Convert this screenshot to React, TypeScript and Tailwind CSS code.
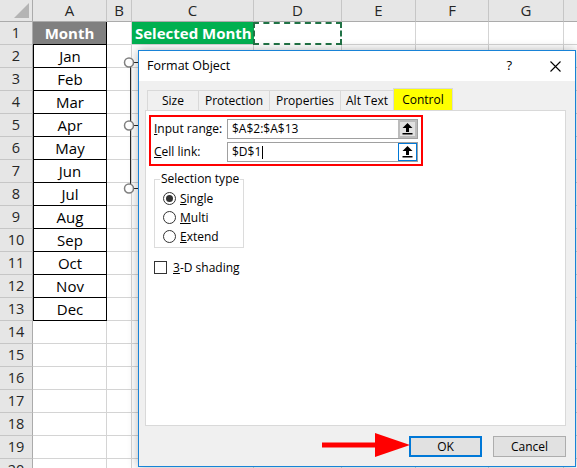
import React from "react";

const months = ["Jan","Feb","Mar","Apr","May","Jun","Jul","Aug","Sep","Oct","Nov","Dec"];
const colLetters = ["A","B","C","D","E","F","G","H"];

function UpArrow() {
  return (
    <svg width="11" height="12" viewBox="0 0 11 12">
      <polygon points="5.5,0 10.5,5 7,5 7,9 4,9 4,5 0.5,5" fill="#000" />
      <rect x="0.5" y="10" width="10" height="1.5" fill="#000" />
    </svg>
  );
}

function Radio({ checked, label, u }: { checked?: boolean; label: string; u: string }) {
  return (
    <div className="flex items-center h-[19px] gap-[4px]">
      <div className="w-[13px] h-[13px] rounded-full border border-[#333] bg-white flex items-center justify-center">
        {checked && <div className="w-[7px] h-[7px] rounded-full bg-[#333]" />}
      </div>
      <span><span className="underline">{u}</span>{label}</span>
    </div>
  );
}

export default function App() {
  const rows = Array.from({ length: 20 }, (_, i) => i + 1);
  return (
    <div className="relative w-[577px] h-[468px] overflow-hidden bg-white" style={{ fontFamily: '"Open Sans", "Liberation Sans", sans-serif' }}>
      <div className="grid w-[639px] grid-cols-[33px_74px_25px_122px_88px_74px_73px_75px_75px] grid-rows-[22px_repeat(20,23px)]">
        {/* header row */}
        <div className="bg-[#e6e6e6] border-r border-b border-[#ababab] relative">
          <svg className="absolute right-[3px] bottom-[3px]" width="15" height="15" viewBox="0 0 15 15">
            <polygon points="15,0 15,15 0,15" fill="#b4b4b4" />
          </svg>
        </div>
        {colLetters.map((c) => (
          <div key={c} className="bg-[#e6e6e6] border-r border-b border-[#c6c6c6] border-b-[#ababab] flex items-center justify-center text-[15px] text-[#262626]">
            {c === "H" ? "" : c}
          </div>
        ))}
        {rows.map((r) => (
          <React.Fragment key={r}>
            <div className="bg-[#e6e6e6] border-r border-r-[#ababab] border-b border-b-[#c6c6c6] flex items-center justify-center text-[14.5px] text-[#262626]">
              {r}
            </div>
            {colLetters.map((c) => {
              if (c === "A" && r === 1)
                return (
                  <div key={c} className="bg-[#808080] border-r border-b border-black flex items-center justify-center text-white font-bold text-[15px]">
                    Month
                  </div>
                );
              if (c === "A" && r <= 13)
                return (
                  <div key={c} className="border-l border-r border-b border-black flex items-center justify-center text-[15px] text-black">
                    {months[r - 2]}
                  </div>
                );
              if (c === "C" && r === 1)
                return (
                  <div key={c} className="bg-[#00b050] border-b border-[#d4d4d4] flex items-center pl-[3px] text-white font-bold text-[15px] whitespace-nowrap">
                    Selected Month
                  </div>
                );
              if (c === "D" && r === 1)
                return (
                  <div key={c} className="border-2 border-dashed border-[#217346] -ml-[1px]" />
                );
              return <div key={c} className="border-r border-b border-[#d4d4d4]" />;
            })}
          </React.Fragment>
        ))}
      </div>

      {/* selection handles of the list box */}
      <svg className="absolute left-[120px] top-[55px]" width="20" height="140" viewBox="0 0 20 140">
        <line x1="10.5" y1="7" x2="10.5" y2="133" stroke="#262626" strokeWidth="1" />
        <line x1="13" y1="7.5" x2="20" y2="7.5" stroke="#262626" strokeWidth="1" />
        <line x1="13" y1="70.5" x2="20" y2="70.5" stroke="#262626" strokeWidth="1" />
        <line x1="13" y1="133.5" x2="20" y2="133.5" stroke="#262626" strokeWidth="1" />
        <circle cx="9" cy="7.5" r="4.5" fill="#fff" stroke="#808080" strokeWidth="1.5" />
        <circle cx="9" cy="70.5" r="4.5" fill="#fff" stroke="#808080" strokeWidth="1.5" />
        <circle cx="9" cy="133.5" r="4.5" fill="#fff" stroke="#808080" strokeWidth="1.5" />
      </svg>

      {/* dialog */}
      <div
        className="absolute left-[138px] top-[50px] w-[438px] h-[417px] border border-[#1883d7] bg-[#f0f0f0] flex flex-col shadow-[0_0_10px_rgba(0,0,0,0.3)] text-[12px] text-black"
        style={{ fontFamily: '"Segoe UI", "Open Sans", "Noto Sans", sans-serif' }}
      >
        <div className="h-[30px] bg-white flex items-center pl-[8px] pr-[14px] text-[12.5px]">
          <span className="flex-1">Format Object</span>
          <span className="mr-[38px] text-[13px]">?</span>
          <svg width="11" height="11" viewBox="0 0 11 11">
            <path d="M0.5 0.5 L10.5 10.5 M10.5 0.5 L0.5 10.5" stroke="#000" strokeWidth="1.1" />
          </svg>
        </div>
        <div className="flex flex-col flex-1 pt-[7px] pl-[6px] pr-[9px] pb-[9px]">
          <div className="flex items-end h-[22px] pl-[2px]">
            {[
              ["Size", "w-[51px]"],
              ["Protection", "w-[71px]"],
              ["Properties", "w-[71px]"],
              ["Alt Text", "w-[53px]"],
            ].map(([t, w]) => (
              <div key={t} className={`${w} h-[20px] border-t border-l border-[#d9d9d9] flex items-center justify-center`}>
                {t}
              </div>
            ))}
            <div className="w-[60px] h-[22px] border-t border-l border-r border-[#d9d9d9] bg-[#ffff00] flex items-center justify-center">
              Control
            </div>
          </div>
          <div className="h-[316px] bg-white border border-[#d9d9d9] pl-[3px] pt-[4px] flex flex-col">
            <div className="w-[274px] border-2 border-[#ff0000] px-[3px] py-[2px] flex flex-col gap-[3px]">
              <div className="flex items-center h-[20px]">
                <span className="w-[73px]"><span className="underline">I</span>nput range:</span>
                <div className="flex-1 h-[20px] border border-[#a0a0a0] flex items-center pl-[4px]">
                  <span className="flex-1">$A$2:$A$13</span>
                  <div className="w-[19px] h-[18px] border-2 border-[#bcbcbc] bg-[#e1e1e1] flex items-center justify-center">
                    <UpArrow />
                  </div>
                </div>
              </div>
              <div className="flex items-center h-[20px]">
                <span className="w-[73px]"><span className="underline">C</span>ell link:</span>
                <div className="flex-1 h-[20px] border border-[#a0a0a0] flex items-center pl-[4px]">
                  <span className="flex-1 flex items-center">$D$1<span className="inline-block w-[1px] h-[13px] bg-black ml-[1px]" /></span>
                  <div className="w-[19px] h-[18px] border border-[#0078d7] bg-white flex items-center justify-center">
                    <UpArrow />
                  </div>
                </div>
              </div>
            </div>
            <fieldset className="ml-[5px] mt-[6px] w-[90px] h-[76px] border border-[#dcdcdc] pl-[8px] pt-[3px]">
              <legend className="ml-[-3px] px-[1px] text-[12px] leading-[14px]">Selection type</legend>
              <Radio checked u="S" label="ingle" />
              <Radio u="M" label="ulti" />
              <Radio u="E" label="xtend" />
            </fieldset>
            <div className="flex items-center gap-[6px] ml-[5px] mt-[12px] h-[15px]">
              <div className="w-[13px] h-[13px] border border-[#333] bg-white" />
              <span><span className="underline">3</span>-D shading</span>
            </div>
          </div>
          <div className="flex justify-end gap-[11px] mt-[10px]">
            <div className="w-[73px] h-[21px] border-2 border-[#0078d7] bg-[#e1e1e1] flex items-center justify-center">OK</div>
            <div className="w-[73px] h-[21px] border border-[#adadad] bg-[#e1e1e1] flex items-center justify-center">Cancel</div>
          </div>
        </div>
      </div>

      {/* red arrow */}
      <svg className="absolute left-[320px] top-[430px]" width="92" height="30" viewBox="0 0 92 30">
        <rect x="2" y="12.5" width="58" height="5" fill="#ff0000" />
        <polygon points="55,3 90,15 55,27" fill="#ff0000" />
      </svg>
    </div>
  );
}
